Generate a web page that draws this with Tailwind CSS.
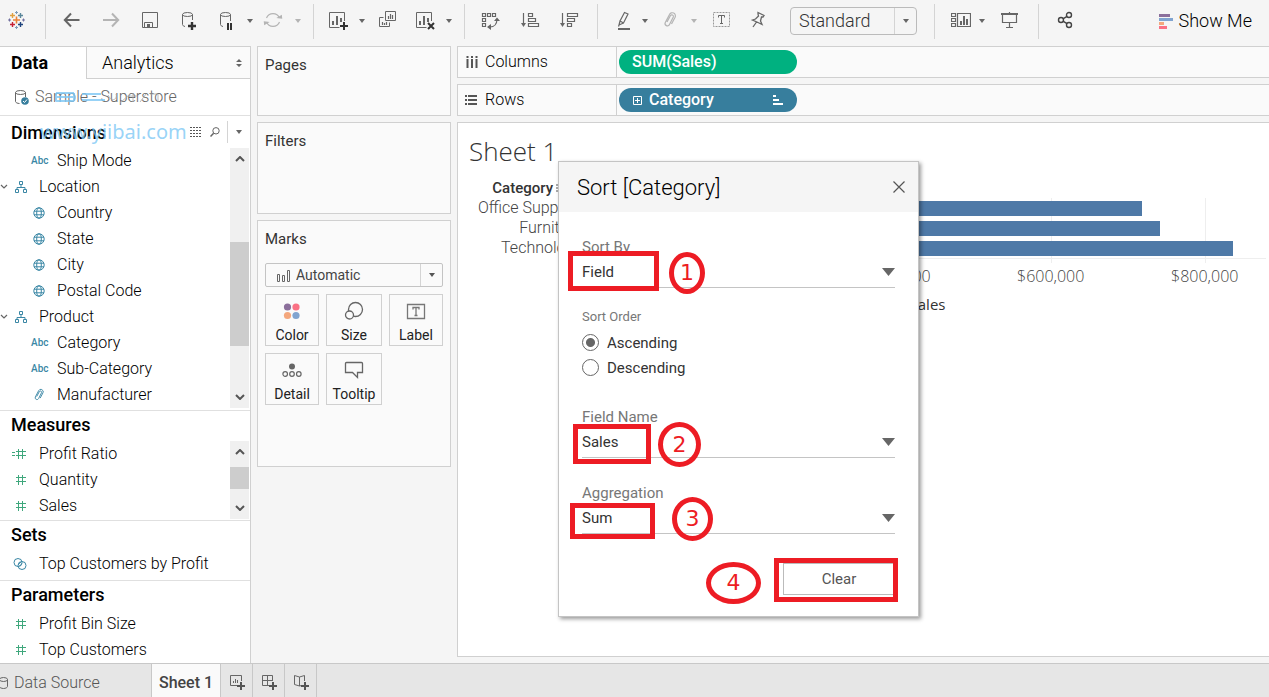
<!DOCTYPE html>
<html lang="en">
<head>
<meta charset="utf-8">
<meta name="viewport" content="width=device-width, initial-scale=1">
<title>Sheet 1</title>
<script src="https://cdn.jsdelivr.net/npm/@tailwindcss/browser@4"></script>
</head>
<body class="h-screen overflow-hidden bg-[#f5f5f5] font-['Roboto',sans-serif] text-[15px] text-[#333]">
<svg class="hidden" aria-hidden="true">
  <symbol id="caret" viewBox="0 0 8 4"><path d="M1 0h6L4 4z" fill="currentColor"/></symbol>
  <symbol id="globe" viewBox="0 0 12 12"><g fill="none" stroke="#3a87a5"><circle cx="6" cy="6" r="5.2"/><ellipse cx="6" cy="6" rx="2.3" ry="5.2"/><path d="M1 4.2h10M1 7.8h10"/></g></symbol>
  <symbol id="tree" viewBox="0 0 12 12"><g fill="none" stroke="#3a87a5"><path d="M4.5.5h3v3h-3zM.5 8.5h3v3h-3zM8.500 8.500h3v3h-3zM6 3.500v3M2 8.500v-2h8v2"/></g></symbol>
  <symbol id="hash" viewBox="0 0 12 12"><path d="M3.500 1v10M7.500 1v10M1 3.500h10M1 7.500h10" fill="none" stroke="#3fa77c"/></symbol>
  <symbol id="clip" viewBox="0 0 14 18"><path d="M4 11 L7.500 4.500 a1.600 1.600 0 0 1 2.800 1.500 L6.500 13.500 a2.300 2.300 0 0 1-4.200-2 L6.500 3.500 a3 3 0 0 1 5.600 2.700 L8.500 13" fill="none" stroke="currentColor" stroke-width="1.200"/></symbol>
  <symbol id="up" viewBox="0 0 10 6"><path d="M1 5l4-4 4 4" fill="none" stroke="#555" stroke-width="2"/></symbol>
  <symbol id="down" viewBox="0 0 10 6"><path d="M1 1l4 4 4-4" fill="none" stroke="#555" stroke-width="2"/></symbol>
  <symbol id="twist" viewBox="0 0 8 6"><path d="M1 1l3 3 3-3" fill="none" stroke="#666" stroke-width="1.200"/></symbol>
</svg>
<div class="flex h-full flex-col">

<!-- Toolbar -->
<header class="flex h-[46px] shrink-0 items-center pb-1 pl-[7px] text-[#666]">
  <button aria-label="Start page"><svg class="h-5 w-5" viewBox="0 0 20 20" fill="none"><path d="M6 9h7M9.500 5.500v7" stroke="#eb8138" stroke-width="1.600"/><path d="M3 4.500h5M5.500 2v5" stroke="#e0a040" stroke-width="1.400"/><path d="M11 4.500h5M13.500 2v5" stroke="#5b879b" stroke-width="1.400"/><path d="M3 13.500h5M5.500 11v5" stroke="#c72035" stroke-width="1.400"/><path d="M11 13.500h5M13.500 11v5" stroke="#1f447e" stroke-width="1.400"/><path d="M8 1.500h3M9.500 0v3M8 16.500h3M9.500 15v3" stroke="#7d9bb8"/><path d="M1 9h3M2.500 7.500v3M15 9h3M16.500 7.500v3" stroke="#7270a0"/></svg></button>
  <span class="ml-[18px] h-[35px] w-px bg-[#d4d4d4]"></span>
  <button class="ml-4" aria-label="Undo"><svg class="h-5 w-5" viewBox="0 0 20 20" fill="none" stroke="currentColor" stroke-width="2"><path d="M17.500 9H3M9 2.500L2.800 9 9 15.500"/></svg></button>
  <button class="ml-[19px] text-[#b4b4b4]" aria-label="Redo"><svg class="h-5 w-5" viewBox="0 0 20 20" fill="none" stroke="currentColor" stroke-width="2"><path d="M2 9h15M11 2.500L17.200 9 11 15.500"/></svg></button>
  <button class="ml-[19px]" aria-label="Save"><svg class="h-5 w-5" viewBox="0 0 20 20" fill="none" stroke="currentColor"><path d="M2.500 1.500h15v15h-15zM4.500 16.500v-5h8v5"/><path d="M7 13h3v3H7z" fill="currentColor" stroke="none"/></svg></button>
  <button class="ml-[19px]" aria-label="New data source"><svg class="h-5 w-5" viewBox="0 0 20 20" fill="none" stroke="currentColor"><ellipse cx="8.500" cy="3.500" rx="5" ry="2"/><path d="M3.500 3.500v10c0 1 1 1.600 2.500 2M13.500 3.500V9"/><path d="M9 15h8M13 11v8" stroke="#333" stroke-width="2.400"/></svg></button>
  <button class="ml-[17px]" aria-label="Pause updates"><svg class="h-5 w-5" viewBox="0 0 20 20" fill="none" stroke="currentColor"><ellipse cx="9.500" cy="3.500" rx="5" ry="2"/><path d="M4.500 3.500v10c0 1 1 1.600 2.500 2M14.500 3.500V10"/><path d="M12 12v7M15 12v7" stroke="#333" stroke-width="2"/></svg></button>
  <button class="ml-[10px]" aria-label="Update options"><svg class="h-1 w-2"><use href="#caret"/></svg></button>
  <button class="ml-[9px] text-[#b4b4b4]" aria-label="Refresh"><svg class="h-5 w-5" viewBox="0 0 20 20" fill="none" stroke="currentColor" stroke-width="1.200"><path d="M3.500 7a7 7 0 0 1 13 0M16.500 11a7 7 0 0 1-13 0"/><path d="M13 6.500h6l-1-4zM7 11.500H1l1 4z" fill="currentColor" stroke="none" transform="rotate(8 10 9)"/></svg></button>
  <button class="ml-[11px] text-[#b4b4b4]" aria-label="Refresh options"><svg class="h-1 w-2"><use href="#caret"/></svg></button>
  <span class="ml-[11px] h-[35px] w-px bg-[#d4d4d4]"></span>
  <button class="ml-[14px]" aria-label="New worksheet"><svg class="h-5 w-5" viewBox="0 0 20 20" fill="none" stroke="currentColor"><path d="M16.500 10V1.500h-15v15h10"/><path d="M5 14v-4M9 14V5M13 11V7" stroke-width="2"/><path d="M12 15h8M16 11v8" stroke="#333" stroke-width="2"/></svg></button>
  <button class="ml-[10px]" aria-label="New worksheet options"><svg class="h-1 w-2"><use href="#caret"/></svg></button>
  <button class="ml-3" aria-label="Duplicate"><svg class="h-5 w-5" viewBox="0 0 20 20" fill="none" stroke="currentColor"><path d="M7.500.5h10v9h-10zM5.500 6.500h-4v9h10v-4"/><path d="M10.500 8V5M12.500 8V3M14.500 8V4M4.500 14v-3M6.500 14v-2M8.500 14v-3" stroke-width="1.200"/></svg></button>
  <button class="ml-[18px]" aria-label="Clear sheet"><svg class="h-5 w-5" viewBox="0 0 20 20" fill="none" stroke="currentColor"><path d="M15.500 10V1.500H.5v15h10"/><path d="M4 14v-4M8 14V5M12 11V7" stroke-width="2"/><path d="M12 12l6 6M18 12l-6 6" stroke="#333" stroke-width="2"/></svg></button>
  <button class="ml-[9px]" aria-label="Clear options"><svg class="h-1 w-2"><use href="#caret"/></svg></button>
  <span class="ml-[11px] h-[35px] w-px bg-[#d4d4d4]"></span>
  <button class="ml-[15px]" aria-label="Swap rows and columns"><svg class="h-5 w-5" viewBox="0 0 20 20" fill="none" stroke="currentColor" stroke-width="1.200"><path d="M2.500 2.500h3v3h-3zM7.500 2.500h3v3h-3zM12.500 2.500h3v3h-3zM2.500 7.500h3v3h-3zM2.500 12.500h3v3h-3zM17 8c0 5-3 8-7 8"/><path d="M14 10l3-3.500 3 3.500zM11 13l-4 3 4 3z" fill="currentColor" stroke="none"/></svg></button>
  <button class="ml-5" aria-label="Sort ascending"><svg class="h-5 w-5" viewBox="0 0 20 20" fill="none" stroke="currentColor" stroke-width="1.200"><path d="M3.500 2v12M8.500 2.500h4v3h-4zM8.500 7.500h7v3h-7zM8.500 12.500h10v3h-10z"/><path d="M1 12h5l-2.500 4z" fill="currentColor" stroke="none"/></svg></button>
  <button class="ml-[19px]" aria-label="Sort descending"><svg class="h-5 w-5" viewBox="0 0 20 20" fill="none" stroke="currentColor" stroke-width="1.200"><path d="M3.500 2v12M8.500 2.500h10v3h-10zM8.500 7.500h7v3h-7zM8.500 12.500h4v3h-4z"/><path d="M1 12h5l-2.500 4z" fill="currentColor" stroke="none"/></svg></button>
  <span class="ml-[18px] h-[35px] w-px bg-[#d4d4d4]"></span>
  <button class="ml-4" aria-label="Highlight"><svg class="h-5 w-5" viewBox="0 0 20 20" fill="none" stroke="currentColor" stroke-width="1.200"><path d="M6 10l4.500-8.500 3.500 1.500-4.500 9zM6 10l-1 4 4.500-2M5 14l-.5 1.500"/><path d="M4 18h12" stroke-width="2"/></svg></button>
  <button class="ml-[7px]" aria-label="Highlight options"><svg class="h-1 w-2"><use href="#caret"/></svg></button>
  <button class="ml-[11px] text-[#b4b4b4]" aria-label="Group"><svg class="mx-[3px] mb-[3px] h-[18px] w-[14px]"><use href="#clip"/></svg></button>
  <button class="ml-[10px] text-[#b4b4b4]" aria-label="Group options"><svg class="h-1 w-2"><use href="#caret"/></svg></button>
  <button class="ml-[14px]" aria-label="Mark labels"><svg class="h-5 w-5" viewBox="0 0 20 20" fill="none" stroke="currentColor"><path d="M1.500 1.500h16v14h-16z" stroke-dasharray="2 1" stroke="#999"/><path d="M6.500 6.500v-2h6v2M9.500 4.500v8M8 12.500h3"/></svg></button>
  <button class="ml-4" aria-label="Fix axes"><svg class="h-5 w-5" viewBox="0 0 20 20" fill="none" stroke="currentColor" stroke-width="1.300"><path d="M10 1.500l6 3-1 1.500-1.500 0-1 4 1.500 3.500-4-2-5.500-2.500 3-1 3-3-.500-2zM8.500 11l-3.500 5"/></svg></button>
  <div class="relative ml-[22px] flex h-7 w-[127px] rounded-sm border border-[#bbb]">
    <select aria-label="Fit" class="h-full w-full appearance-none px-2 text-[18px] leading-none font-light text-[#333] outline-none"><option>Standard</option></select>
    <span class="pointer-events-none absolute inset-y-0 right-0 flex w-[22px] items-center justify-center border-l border-[#d4d4d4]"><svg class="h-1 w-2"><use href="#caret"/></svg></span>
  </div>
  <span class="ml-[17px] h-[35px] w-px bg-[#d4d4d4]"></span>
  <button class="ml-4" aria-label="Show cards"><svg class="h-5 w-5" viewBox="0 0 20 20" fill="none" stroke="currentColor" stroke-width="1.200"><path d="M.5 2.500h4v3h-4zM.5 7.500h4v3h-4zM.5 12.500h4v3h-4zM6.500 2.500h13v13h-13z"/><path d="M10 14v-4M13 14V5M16 14V8" stroke-width="2"/></svg></button>
  <button class="ml-[7px]" aria-label="Card options"><svg class="h-1 w-2"><use href="#caret"/></svg></button>
  <button class="ml-[14px]" aria-label="Presentation mode"><svg class="h-5 w-5" viewBox="0 0 20 20" fill="none" stroke="currentColor" stroke-width="1.200"><path d="M1 3h17" stroke-width="2"/><path d="M2.500 3v8.500h14V3M9.500 1v2M9.500 11.500v5M6 16.500h7"/></svg></button>
  <span class="ml-[18px] h-[35px] w-px bg-[#d4d4d4]"></span>
  <button class="ml-4" aria-label="Share"><svg class="h-5 w-5" viewBox="0 0 20 20" fill="none" stroke="#444" stroke-width="1.400"><circle cx="6" cy="9" r="2.500"/><circle cx="14" cy="4" r="2.500"/><circle cx="14" cy="14" r="2.500"/><path d="M8 7.800l4-2.500M8 10.200l4 2.500"/></svg></button>
  <button class="mr-[17px] ml-auto flex items-center gap-[6px] text-[18px] leading-6 font-light text-black"><svg class="h-[15px] w-[14px]" viewBox="0 0 14 15"><path d="M0 0h11v3H0z" fill="#8b6f9b"/><path d="M0 4h14v3H0z" fill="#80a4d0"/><path d="M0 8h5v3H0z" fill="#f4a77d"/><path d="M0 12h8v3H0z" fill="#fa7184"/></svg>Show Me</button>
</header>

<div class="flex min-h-0 flex-1">
<!-- Data pane -->
<aside class="flex w-[251px] shrink-0 flex-col overflow-hidden border-r border-[#d0d0d0] bg-white text-[16px] font-light text-black">
  <div class="flex h-[33px] shrink-0 border-t border-[#d0d0d0]">
    <button class="w-[86px] pb-[2px] pl-[11px] text-left text-[18px] font-bold">Data</button>
    <button class="flex flex-1 items-center justify-between border-b border-l border-[#d0d0d0] bg-[#fafafa] pr-[7px] pl-[15px] text-[18px]">Analytics<svg class="h-2 w-2" viewBox="0 0 8 8" fill="#666"><path d="M4 0l3 3H1zM4 8l3-3H1z"/></svg></button>
  </div>
  <div class="relative flex h-[37px] shrink-0 items-center border-b border-[#e0e0e0] pl-[15px] text-[#666]">
    <svg class="mr-[6px] h-[15px] w-[14px]" viewBox="0 0 14 15"><g fill="none" stroke="#666"><ellipse cx="5.500" cy="2.500" rx="5" ry="2"/><path d="M.5 2.500v9c0 1 2 2 4 2M10.500 2.500V7"/></g><circle cx="10" cy="11" r="3.800" fill="#377e9d"/><path d="M8 11l1.500 1.500 2.500-3" fill="none" stroke="#fff"/></svg>Sample - Superstore
    <svg class="pointer-events-none absolute top-3 left-[54px] h-4 w-28 opacity-80" viewBox="0 0 112 16" fill="none" aria-hidden="true"><path d="M2 2h18M2 6h18M2 10h18M2 2v8M20 2v8M28 3h19M28 9h23" stroke="#7ec8f5" stroke-width="2"/><path d="M54 4c4 8 10 4 8-1M66 12l10-9M74 5h9M79 2v9M86 11l6-8M96 3h8v8" stroke="#aaa"/></svg>
  </div>
  <div class="relative flex h-8 shrink-0 items-center pl-[11px] text-[#666]">
    <h2 class="flex-1 text-[18px] font-medium text-black">Dimensions</h2>
    <span class="pointer-events-none absolute left-10 font-['Noto_Sans',sans-serif] text-[20px] font-normal text-[#7ec8f5]/80">www.yiibai.com</span>
    <button class="relative" aria-label="View data"><svg class="h-[10px] w-3" viewBox="0 0 12 10"><path d="M0 .5h12M0 3.500h12M0 6.500h12M0 9.500h12" stroke="#555" stroke-dasharray="2 1"/></svg></button>
    <button class="relative ml-2" aria-label="Find field"><svg class="h-[10px] w-[10px]" viewBox="0 0 10 10" fill="none" stroke="#666"><circle cx="6" cy="3.800" r="3.200"/><path d="M3.600 6.200L.5 9.500" stroke-width="1.500"/></svg></button>
    <span class="ml-[7px] h-[22px] w-px bg-[#d4d4d4]"></span>
    <button class="mr-[7px] ml-[7px]" aria-label="Dimension options"><svg class="h-1 w-2"><use href="#caret"/></svg></button>
  </div>
  <div class="flex h-[262px] shrink-0">
    <ul class="flex-1 leading-[26px] [&_li]:flex [&_li]:items-center">
      <li><span class="w-[57px] pl-[31px] text-[10px] font-medium text-[#3a87a5]">Abc</span>Ship Mode</li>
      <li><svg class="h-[6px] w-2"><use href="#twist"/></svg><svg class="mr-3 ml-[7px] h-3 w-3"><use href="#tree"/></svg>Location</li>
      <li><svg class="mr-3 ml-[33px] h-3 w-3"><use href="#globe"/></svg>Country</li>
      <li><svg class="mr-3 ml-[33px] h-3 w-3"><use href="#globe"/></svg>State</li>
      <li><svg class="mr-3 ml-[33px] h-3 w-3"><use href="#globe"/></svg>City</li>
      <li><svg class="mr-3 ml-[33px] h-3 w-3"><use href="#globe"/></svg>Postal Code</li>
      <li><svg class="h-[6px] w-2"><use href="#twist"/></svg><svg class="mr-3 ml-[7px] h-3 w-3"><use href="#tree"/></svg>Product</li>
      <li><span class="w-[57px] pl-[31px] text-[10px] font-medium text-[#3a87a5]">Abc</span>Category</li>
      <li><span class="w-[57px] pl-[31px] text-[10px] font-medium text-[#3a87a5]">Abc</span>Sub-Category</li>
      <li><svg class="mr-3 ml-[33px] h-[14px] w-3 text-[#3a87a5]"><use href="#clip"/></svg>Manufacturer</li>
    </ul>
    <div class="mr-px mb-[2px] flex w-[19px] flex-col items-center bg-[#f0f0f0]">
      <svg class="mt-2 h-[6px] w-[10px]"><use href="#up"/></svg>
      <span class="mt-20 h-[104px] w-full bg-[#cdcdcd]"></span>
      <svg class="mt-auto mb-2 h-[6px] w-[10px]"><use href="#down"/></svg>
    </div>
  </div>
  <section class="shrink-0 border-t border-[#e0e0e0]">
    <h2 class="pb-[2px] pl-[11px] text-[18px] leading-[28px] font-medium">Measures</h2>
    <div class="flex h-[79px]">
      <ul class="flex-1 pl-[11px] leading-[26px] [&_li]:flex [&_li]:items-center">
        <li><svg class="mr-3 h-3 w-4" viewBox="0 0 16 12"><path d="M7.500 1v10M11.500 1v10M5 3.500h10M5 7.500h10M1 4.500h3M1 7.500h3" fill="none" stroke="#3fa77c"/></svg>Profit Ratio</li>
        <li><svg class="mr-3 ml-1 h-3 w-3"><use href="#hash"/></svg>Quantity</li>
        <li><svg class="mr-3 ml-1 h-3 w-3"><use href="#hash"/></svg>Sales</li>
      </ul>
      <div class="mr-px mb-px flex w-[19px] flex-col items-center bg-[#f0f0f0]">
        <svg class="mt-2 h-[6px] w-[10px]"><use href="#up"/></svg>
        <span class="mt-3 h-[22px] w-full bg-[#cdcdcd]"></span>
        <svg class="mt-auto mb-2 h-[6px] w-[10px]"><use href="#down"/></svg>
      </div>
    </div>
  </section>
  <section class="shrink-0 border-t border-[#e0e0e0] pb-[3px]">
    <h2 class="pb-[2px] pl-[11px] text-[18px] leading-[28px] font-medium">Sets</h2>
    <ul class="pl-[13px] leading-[26px]"><li class="flex items-center"><svg class="mr-3 h-[14px] w-[14px]" viewBox="0 0 14 14" fill="none" stroke="#3a87a5"><circle cx="5" cy="5.500" r="4"/><circle cx="9" cy="8.500" r="4"/><path d="M5 8l3.500-3.500M6 9.500L9 6.500" stroke-width=".8"/></svg>Top Customers by Profit</li></ul>
  </section>
  <section class="shrink-0 border-t border-[#e0e0e0]">
    <h2 class="pb-[2px] pl-[11px] text-[18px] leading-[28px] font-medium">Parameters</h2>
    <ul class="pl-[15px] leading-[26px] [&_li]:flex [&_li]:items-center">
      <li><svg class="mr-3 h-3 w-3"><use href="#hash"/></svg>Profit Bin Size</li>
      <li><svg class="mr-3 h-3 w-3"><use href="#hash"/></svg>Top Customers</li>
    </ul>
  </section>
</aside>

<!-- Cards -->
<div class="ml-[6px] flex w-[194px] shrink-0 flex-col gap-[6px]">
  <section class="h-[70px] border border-[#d0d0d0] bg-[#fafafa] px-[7px] py-[6px]"><h2 class="leading-6">Pages</h2></section>
  <section class="h-[92px] border border-[#d0d0d0] bg-[#fafafa] px-[7px] py-[6px]"><h2 class="leading-6">Filters</h2></section>
  <section class="h-[247px] border border-[#d0d0d0] bg-[#fafafa] px-[7px] py-[6px]">
    <h2 class="leading-6">Marks</h2>
    <div class="relative mt-3 h-6 rounded-xs border border-[#c4c4c4]">
      <svg class="pointer-events-none absolute top-[6px] left-[11px] h-3 w-[14px]" viewBox="0 0 14 12" fill="none" stroke="#666"><path d="M.5 4.500h2v7h-2zM5.500 5.500h2v6h-2zM10.500.5h2v11h-2z"/></svg>
      <select aria-label="Mark type" class="block h-full w-full appearance-none pl-[30px] text-[14px] leading-none text-[#444] outline-none"><option>Automatic</option></select>
      <span class="pointer-events-none absolute inset-y-0 right-0 flex w-[22px] items-center justify-center border-l border-[#d4d4d4] text-[#555]"><svg class="h-1 w-2"><use href="#caret"/></svg></span>
    </div>
    <div class="mt-[7px] grid grid-cols-[54px_56px_54px] justify-between gap-y-[7px] text-[14px] leading-5 text-[#222] [&_button]:flex [&_button]:h-[52px] [&_button]:flex-col [&_button]:items-center [&_button]:justify-between [&_button]:border [&_button]:border-[#d0d0d0] [&_button]:pt-[6px]">
      <button><svg class="h-5 w-5" viewBox="0 0 20 20"><circle cx="5.500" cy="6" r="3.600" fill="#8b6f9b"/><circle cx="14" cy="6" r="3.600" fill="#fa7184"/><circle cx="5.500" cy="14.500" r="3.600" fill="#f4a77d"/><circle cx="14" cy="14.500" r="3.600" fill="#80a4d0"/></svg>Color</button>
      <button><svg class="h-5 w-5" viewBox="0 0 20 20" fill="#fafafa" stroke="#666" stroke-width="1.300"><circle cx="11.500" cy="8.500" r="7"/><circle cx="5.500" cy="14" r="4"/></svg>Size</button>
      <button><svg class="h-5 w-5" viewBox="0 0 20 20" fill="none" stroke="#777" stroke-width="1.300"><path d="M1.500 3.500h17v14h-17zM7 8.500v-2h6v2M10 6.500v8M8.500 14.500h3"/></svg>Label</button>
      <button><svg class="h-5 w-5" viewBox="0 0 20 20" fill="none" stroke="#666" stroke-width="1.200"><circle cx="10" cy="6.500" r="3" fill="#666" stroke="none"/><circle cx="3.200" cy="14" r="2.300"/><circle cx="10" cy="14" r="2.300"/><circle cx="16.800" cy="14" r="2.300"/></svg>Detail</button>
      <button><svg class="h-5 w-5" viewBox="0 0 20 20" fill="none" stroke="#666" stroke-width="1.300"><path d="M2.500 2.500h15a1 1 0 0 1 1 1v9h-5v5l-5-5h-7v-9a1 1 0 0 1 1-1z"/></svg>Tooltip</button>
    </div>
  </section>
</div>

<!-- Shelves and view -->
<main class="ml-[6px] flex min-w-0 flex-1 flex-col gap-[6px] pb-[6px]">
  <div class="flex h-8 shrink-0 border border-r-0 border-[#d0d0d0] bg-[#fafafa]">
    <div class="flex w-[159px] items-center border-r border-[#d0d0d0] pl-2 text-[16px] font-light text-black"><svg class="mr-[7px] h-3 w-3" viewBox="0 0 12 12"><path d="M1.500 0v2M1.500 3v9M6 0v2M6 3v9M10.500 0v2M10.500 3v9" stroke="#555" stroke-width="2"/></svg>Columns</div>
    <button class="my-[3px] ml-[2px] flex w-[178px] items-center rounded-full bg-[#00b180] pl-[13px] text-[16px] font-medium text-white">SUM(Sales)</button>
  </div>
  <div class="flex h-8 shrink-0 border border-r-0 border-[#d0d0d0] bg-[#fafafa]">
    <div class="flex w-[159px] items-center border-r border-[#d0d0d0] pl-[7px] text-[16px] font-light text-black"><svg class="mr-2 h-3 w-3" viewBox="0 0 12 12"><path d="M0 2h2M3 2h9M0 6h2M3 6h9M0 10h2M3 10h9" stroke="#555" stroke-width="2"/></svg>Rows</div>
    <button class="my-[3px] ml-[2px] flex w-[178px] items-center rounded-full bg-[#377e9d] pr-[14px] pl-[14px] text-[16px] font-medium text-white"><svg class="mr-[7px] h-[9px] w-[9px]" viewBox="0 0 9 9" fill="none" stroke="#fff"><path d="M.5.5h8v8h-8zM4.500 2v5M2 4.500h5"/></svg>Category<svg class="ml-auto h-[10px] w-[10px]" viewBox="0 0 10 10"><path d="M0 1h3M0 5h6M0 9h10" stroke="#fff" stroke-width="2"/></svg></button>
  </div>
  <div class="flex-1 border border-r-0 border-[#d0d0d0] bg-white pt-2 pr-[3px] pl-[11px] text-[16px] text-[#444]">
    <h1 class="pb-[2px] font-['Open_Sans',sans-serif] text-[26px] leading-10 font-light text-[#333]">Sheet 1</h1>
    <div class="flex">
      <div class="w-[120px] shrink-0 pr-[7px] text-right leading-5 font-light whitespace-nowrap">
        <p class="mt-[5px] flex items-center justify-end gap-[3px] pr-[16px] text-[15px] font-medium text-[#333]">Category<svg class="h-2 w-[10px]" viewBox="0 0 10 8"><path d="M0 1h2M0 4h5M0 7h8" stroke="#555"/></svg></p>
        <p>Office Supplies</p><p>Furniture</p><p>Technology</p>
      </div>
      <div class="relative mt-[25px] flex-1">
        <div class="absolute inset-x-0 top-0 h-[65px]">
          <span class="absolute top-0 h-full w-px bg-[#eee]" style="left:0%"></span>
          <span class="absolute top-0 h-full w-px bg-[#eee]" style="left:22.75%"></span>
          <span class="absolute top-0 h-full w-px bg-[#eee]" style="left:45.5%"></span>
          <span class="absolute top-0 h-full w-px bg-[#eee]" style="left:68.2%"></span>
          <span class="absolute top-0 h-full w-px bg-[#eee]" style="left:90.95%"></span>
        </div>
        <div class="relative flex h-[61px] flex-col gap-[5px] border-b border-[#eee] pt-[3px]">
          <span class="h-[15px] bg-[#4e79a7]" style="width:81.7%"></span>
          <span class="h-[15px] bg-[#4e79a7]" style="width:84.4%"></span>
          <span class="h-[15px] bg-[#4e79a7]" style="width:95.1%"></span>
        </div>
        <div class="relative mt-[7px] h-5 font-['Open_Sans',sans-serif] text-[16px] leading-5 font-light">
          <span class="absolute -translate-x-1/2" style="left:0%">$0</span>
          <span class="absolute -translate-x-1/2" style="left:22.75%">$200,000</span>
          <span class="absolute -translate-x-1/2" style="left:45.5%">$400,000</span>
          <span class="absolute -translate-x-1/2" style="left:68.2%">$600,000</span>
          <span class="absolute -translate-x-1/2" style="left:90.95%">$800,000</span>
        </div>
        <p class="mt-2 text-center font-['Open_Sans',sans-serif] text-[15px] leading-5 text-[#333]">Sales</p>
      </div>
    </div>
  </div>
</main>
</div>

<!-- Sheet tabs -->
<footer class="flex h-[34px] shrink-0 border-t border-[#c8c8c8] bg-[#e6e6e6] text-[#555] [&>button]:border-r [&>button]:border-[#c8c8c8]">
  <button class="flex w-[152px] items-center pt-1 text-[16px] font-light"><svg class="mr-[6px] h-3 w-2" viewBox="0 0 8 12" fill="none" stroke="#666"><ellipse cx="3.500" cy="2.500" rx="4" ry="2"/><path d="M7.500 2.500v7c0 1-2 2-4 2s-4-1-4-2"/></svg>Data Source</button>
  <button class="w-[69px] bg-[#fafafa] pt-1 text-[16px] font-medium text-[#444]">Sheet 1</button>
  <button class="flex w-8 items-center justify-center pt-[2px]" aria-label="New worksheet"><svg class="h-4 w-4" viewBox="0 0 16 16" fill="none" stroke="#666"><path d="M12.500 7V1.500H1.500v10H8M4.500 9V7M6.500 9V5M8.500 9V6"/><path d="M8 12h8M12 8v8" stroke="#555" stroke-width="2"/></svg></button>
  <button class="flex w-8 items-center justify-center pt-[2px]" aria-label="New dashboard"><svg class="h-4 w-4" viewBox="0 0 16 16" fill="none" stroke="#666"><path d="M11.500 7V1.500h-10v10H8M6.500 1.500v10M1.500 6.500h10"/><path d="M8 12h8M12 8v8" stroke="#555" stroke-width="2"/></svg></button>
  <button class="flex w-8 items-center justify-center pt-[2px]" aria-label="New story"><svg class="h-4 w-4" viewBox="0 0 16 16" fill="none" stroke="#666"><path d="M11.500 7V1.500L6.500 3l-5-1.500v9L6.500 12l2-.5M6.500 3v9"/><path d="M8 12h8M12 8v8" stroke="#555" stroke-width="2"/></svg></button>
</footer>
</div>

<!-- Sort dialog -->
<div role="dialog" aria-labelledby="dlg" class="absolute top-[161px] left-[558px] w-[361px] border border-[#c4c4c4] bg-white shadow-[2px_2px_4px_#0006]">
  <div class="flex h-[50px] items-center justify-between bg-[#f5f5f5] pr-[13px] pl-[18px]">
    <h2 id="dlg" class="text-[22px] font-light text-black">Sort [Category]</h2>
    <button aria-label="Close"><svg class="h-3 w-3" viewBox="0 0 12 12"><path d="M.5.5l11 11M11.500.5l-11 11" stroke="#555" stroke-width="1.200"/></svg></button>
  </div>
  <form class="px-[23px] pt-[25px] pb-[21px] text-[15px] leading-5">
    <label for="by" class="block text-[#777]">Sort By</label>
    <div class="relative flex h-[31px] items-center border-b border-[#c4c4c4]"><select id="by" class="h-full w-full appearance-none outline-none"><option>Field</option></select><svg class="pointer-events-none absolute right-0 h-2 w-[13px]" viewBox="0 0 13 8"><path d="M0 0h13L6.500 8z" fill="#666"/></svg></div>
    <fieldset class="mt-[19px]">
      <legend class="mb-[3px] text-[13px] text-[#777]">Sort Order</legend>
      <label class="flex h-[25px] items-center gap-2"><input type="radio" name="order" checked class="h-[17px] w-[17px] appearance-none rounded-full border border-[#666] bg-white checked:bg-[radial-gradient(circle,#666_4px,transparent_5px)]">Ascending</label>
      <label class="flex h-[25px] items-center gap-2"><input type="radio" name="order" class="h-[17px] w-[17px] appearance-none rounded-full border border-[#666] bg-white">Descending</label>
    </fieldset>
    <label for="fld" class="mt-[27px] block text-[#777]">Field Name</label>
    <div class="relative flex h-[31px] items-center border-b border-[#c4c4c4]"><select id="fld" class="h-full w-full appearance-none outline-none"><option>Sales</option></select><svg class="pointer-events-none absolute right-0 h-2 w-[13px]" viewBox="0 0 13 8"><path d="M0 0h13L6.500 8z" fill="#666"/></svg></div>
    <label for="agg" class="mt-[25px] block text-[#777]">Aggregation</label>
    <div class="relative flex h-[31px] items-center border-b border-[#c4c4c4]"><select id="agg" class="h-full w-full appearance-none outline-none"><option>Sum</option></select><svg class="pointer-events-none absolute right-0 h-2 w-[13px]" viewBox="0 0 13 8"><path d="M0 0h13L6.500 8z" fill="#666"/></svg></div>
    <div class="mt-[29px] flex justify-end"><button type="button" class="h-8 w-28 border border-[#bbb] text-[#555]">Clear</button></div>
  </form>
  <!-- Step callouts -->
  <div class="pointer-events-none absolute -top-px -left-px font-['DejaVu_Sans',sans-serif] text-[22px] leading-none text-[#ed1c24] [&>*]:absolute [&>*]:border-[5px] [&>*]:border-[#ed1c24] [&>b]:flex [&>b]:items-center [&>b]:justify-center [&>b]:rounded-[50%] [&>b]:font-normal">
    <i class="top-[90px] left-[10px] h-10 w-[91px]"></i><b class="top-[91px] left-[111px] h-[42px] w-9">1</b>
    <i class="top-[263px] left-[15px] h-10 w-[78px]"></i><b class="top-[261px] left-[100px] h-[45px] w-[43px]">2</b>
    <i class="top-[342px] left-3 h-9 w-[85px]"></i><b class="top-[336px] left-[114px] h-11 w-[41px]">3</b>
    <i class="top-[397px] left-[216px] h-11 w-[124px]"></i><b class="top-[401px] left-[148px] h-[42px] w-[55px]">4</b>
  </div>
</div>
</body>
</html>
